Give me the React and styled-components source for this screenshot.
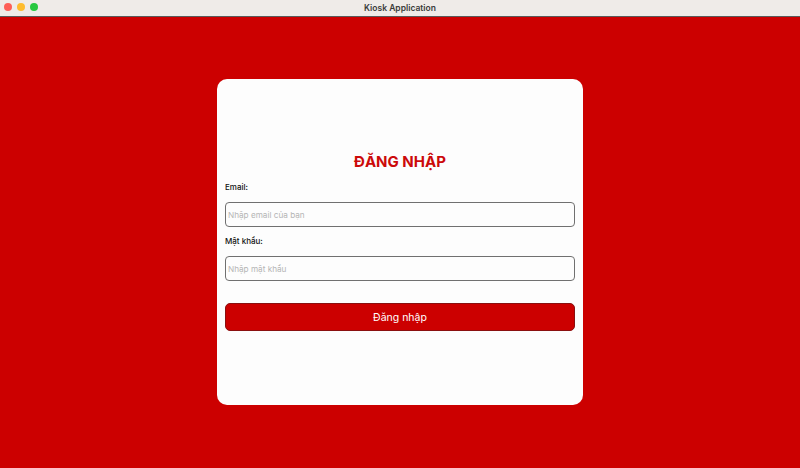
import styled, { createGlobalStyle } from "styled-components";

const GlobalStyle = createGlobalStyle`
  html, body {
    margin: 0;
    padding: 0;
    height: 100%;
  }
  body {
    font-family: Inter, "Noto Sans", sans-serif;
  }
  #root {
    height: 100%;
  }
`;

const Window = styled.div`
  display: flex;
  flex-direction: column;
  width: 800px;
  height: 468px;
  background: #cc0000;
  overflow: hidden;
`;

const TitleBar = styled.div`
  position: relative;
  display: flex;
  align-items: center;
  justify-content: center;
  height: 16px;
  flex-shrink: 0;
  background: #efebe8;
  border-bottom: 1px solid #5a5a5a;
  font-size: 8.5px;
  font-weight: 600;
  color: #3b3b3b;
`;

const Lights = styled.div`
  position: absolute;
  left: 4px;
  top: 3px;
  display: flex;
  gap: 5px;
`;

const Light = styled.span`
  width: 8px;
  height: 8px;
  border-radius: 50%;
  background: ${(p) => p.$color};
`;

const Stage = styled.main`
  flex: 1;
  display: flex;
  justify-content: center;
  padding-top: 62px;
`;

const Card = styled.form`
  display: flex;
  flex-direction: column;
  box-sizing: border-box;
  width: 366px;
  height: 326px;
  padding: 72px 8px 0;
  background: #fdfdfd;
  border-radius: 10px;
`;

const Heading = styled.h1`
  margin: 0 0 8px;
  text-align: center;
  font-size: 15px;
  font-weight: 700;
  color: #cc0a0a;
  line-height: 22px;
`;

const Label = styled.label`
  font-size: 8px;
  font-weight: 500;
  color: #111;
  line-height: 12px;
  margin-bottom: 9px;
`;

const Input = styled.input`
  box-sizing: border-box;
  width: 100%;
  height: 25px;
  padding: 0 2px;
  margin-bottom: 8px;
  border: 1.5px solid #707070;
  border-radius: 4px;
  background: #fdfdfd;
  font-family: Inter, "Noto Sans", sans-serif;
  font-size: 8.2px;
  outline: none;

  &::placeholder {
    color: #b5b5b5;
  }
`;

const Submit = styled.button`
  box-sizing: border-box;
  width: 100%;
  height: 28px;
  margin-top: 14px;
  border: 1px solid #8a1010;
  border-radius: 5px;
  background: #cc0000;
  color: #fff;
  font-family: Inter, "Noto Sans", sans-serif;
  font-size: 10.5px;
  cursor: pointer;
`;

export default function App() {
  return (
    <>
      <GlobalStyle />
      <Window>
        <TitleBar>
          <Lights>
            <Light $color="#fe5f57" />
            <Light $color="#febc2e" />
            <Light $color="#28c840" />
          </Lights>
          Kiosk Application
        </TitleBar>
        <Stage>
          <Card onSubmit={(e) => e.preventDefault()}>
            <Heading>ĐĂNG NHẬP</Heading>
            <Label htmlFor="email">Email:</Label>
            <Input id="email" type="email" placeholder="Nhập email của bạn" />
            <Label htmlFor="password">Mật khẩu:</Label>
            <Input id="password" type="password" placeholder="Nhập mật khẩu" />
            <Submit type="submit">Đăng nhập</Submit>
          </Card>
        </Stage>
      </Window>
    </>
  );
}
